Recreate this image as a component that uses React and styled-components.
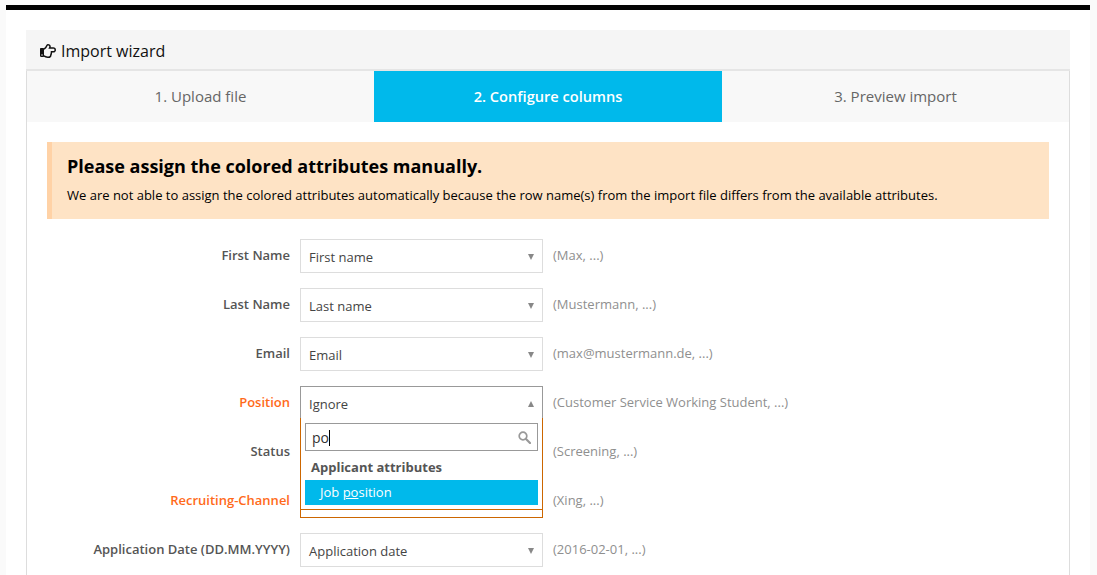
import React from "react";
import styled, { createGlobalStyle } from "styled-components";
import { FaRegHandPointRight } from "react-icons/fa";

const Global = createGlobalStyle`
  html, body { margin: 0; padding: 0; height: 575px; overflow: hidden; background: #fff; }
  body { font-family: "Open Sans", "Liberation Sans", sans-serif; }
`;
const Page = styled.div`
  height: 575px; overflow: hidden; box-sizing: border-box;
  padding: 5px 7px 0 6px; background: #fafafa;
`;
const Sheet = styled.div`
  border-top: 5px solid #000;
  padding: 20px 20px 0;
  background: #fff;
  height: 570px; box-sizing: border-box;
`;
const Heading = styled.div`
  height: 41px; box-sizing: border-box; padding: 2px 0 0 14px; background: #f5f5f5; border-bottom: 2px solid #e5e5e5;
  display: flex; align-items: center; gap: 5px;
  font-size: 16px; color: #111;
`;
const Panel = styled.div`
  border-left: 1px solid #ddd; border-right: 1px solid #ddd;
`;
const Tabs = styled.div`
  display: grid; grid-template-columns: 347px 348px 1fr; height: 51px;
`;
const Tab = styled.div`
  display: flex; align-items: center; justify-content: center; padding-bottom: 2px;
  font-size: ${p => (p.$active ? "14.6px" : "15px")}; font-weight: ${p => (p.$active ? 600 : 400)};
  background: ${p => (p.$active ? "#00b9eb" : "#f8f8f8")};
  color: ${p => (p.$active ? "#fff" : "#666")};
`;
const Body = styled.div`
  padding: 20px 20px 40px;
`;
const Alert = styled.div`
  height: 77px; box-sizing: border-box; background: #fee3c5;
  border-left: 5px solid #ffd2a6; padding: 11px 15px; margin-bottom: 20px; color: #000;
`;
const AlertTitle = styled.div`
  font-size: 18px; font-weight: 700; line-height: 26px; margin-bottom: 6px;
`;
const AlertText = styled.div`
  font-size: 13px; line-height: 20px;
`;
const Rows = styled.div`
  display: flex; flex-direction: column; gap: 15px;
`;
const Row = styled.div`
  display: grid; grid-template-columns: 243px 243px 1fr; column-gap: 10px; height: 34px;
`;
const Label = styled.div`
  text-align: right; font-size: 13px; font-weight: 600; line-height: 32px;
  color: ${p => (p.$warn ? "#ff6a1a" : "#555")};
`;
const Hint = styled.div`
  font-size: 13px; line-height: 32px; color: #8f8f8f;
`;
const SelectWrap = styled.div`
  position: relative;
`;
const Select = styled.div`
  height: 34px; box-sizing: border-box; background: #fff;
  border: 1px solid ${p => p.$border};
  display: flex; align-items: center; justify-content: space-between;
  padding: 1px 8px 0 8px; font-size: 13px; color: #444;
`;
const Arrow = styled.span`
  width: 0; height: 0; border-left: 3.5px solid transparent; border-right: 3.5px solid transparent;
  ${p => (p.$up ? "border-bottom: 6px solid #888;" : "border-top: 6px solid #888;")}
`;
const Drop = styled.div`
  position: absolute; z-index: 2; top: 32px; left: 0; right: 0; height: 92px; box-sizing: border-box;
  background: #fff; border: 1px solid #c60; border-top: 0; padding: 5px 4px 0;
`;
const Search = styled.div`
  height: 28px; box-sizing: border-box; border: 1px solid #999;
  display: flex; align-items: center; justify-content: space-between;
  padding: 0 6px; font-size: 14px; color: #333;
`;
const Caret = styled.span`
  display: inline-block; width: 1px; height: 16px; background: #000; vertical-align: -3px;
`;
const Group = styled.div`
  font-size: 13px; font-weight: 700; color: #555; line-height: 20px; padding: 6px 6px 3px;
`;
const Option = styled.div`
  height: 25px; background: #00b9eb; color: #fff; font-size: 13px; font-weight: 400;
  line-height: 25px; padding-left: 15px;
`;
const Match = styled.span`
  text-decoration: underline;
`;

const Glass = () => (
  <svg width="13" height="13" viewBox="0 0 13 13" aria-hidden="true">
    <circle cx="5" cy="5" r="3.800" fill="none" stroke="#999" strokeWidth="1.700" />
    <path d="M8 8 12 12" stroke="#999" strokeWidth="2.200" strokeLinecap="round" />
  </svg>
);

const rows = [
  { label: "First Name", value: "First name", hint: "(Max, ...)" },
  { label: "Last Name", value: "Last name", hint: "(Mustermann, ...)" },
  { label: "Email", value: "Email", hint: "(max@mustermann.de, ...)" },
  { label: "Position", value: "Ignore", hint: "(Customer Service Working Student, ...)", warn: true, open: true },
  { label: "Status", value: "", hint: "(Screening, ...)", covered: true },
  { label: "Recruiting-Channel", value: "", hint: "(Xing, ...)", warn: true, covered: true },
  { label: "Application Date (DD.MM.YYYY)", value: "Application date", hint: "(2016-02-01, ...)" },
];

const borderOf = r => (r.open ? "#999" : r.covered && r.warn ? "#c60" : "#ddd");

export default function App() {
  return (
    <>
      <Global />
      <Page>
        <Sheet>
          <Heading><FaRegHandPointRight size={16} />Import wizard</Heading>
          <Panel>
            <Tabs>
              <Tab>1. Upload file</Tab>
              <Tab $active>2. Configure columns</Tab>
              <Tab>3. Preview import</Tab>
            </Tabs>
            <Body>
              <Alert>
                <AlertTitle>Please assign the colored attributes manually.</AlertTitle>
                <AlertText>We are not able to assign the colored attributes automatically because the row name(s) from the import file differs from the available attributes.</AlertText>
              </Alert>
              <Rows>
                {rows.map(r => (
                  <Row key={r.label}>
                    <Label $warn={r.warn}>{r.label}</Label>
                    <SelectWrap>
                      <Select $border={borderOf(r)}>{r.value}{!r.covered && <Arrow $up={r.open} />}</Select>
                      {r.open && (
                        <Drop>
                          <Search><span>po<Caret /></span><Glass /></Search>
                          <Group>Applicant attributes</Group>
                          <Option>Job <Match>po</Match>sition</Option>
                        </Drop>
                      )}
                    </SelectWrap>
                    <Hint>{r.hint}</Hint>
                  </Row>
                ))}
              </Rows>
            </Body>
          </Panel>
        </Sheet>
      </Page>
    </>
  );
}
